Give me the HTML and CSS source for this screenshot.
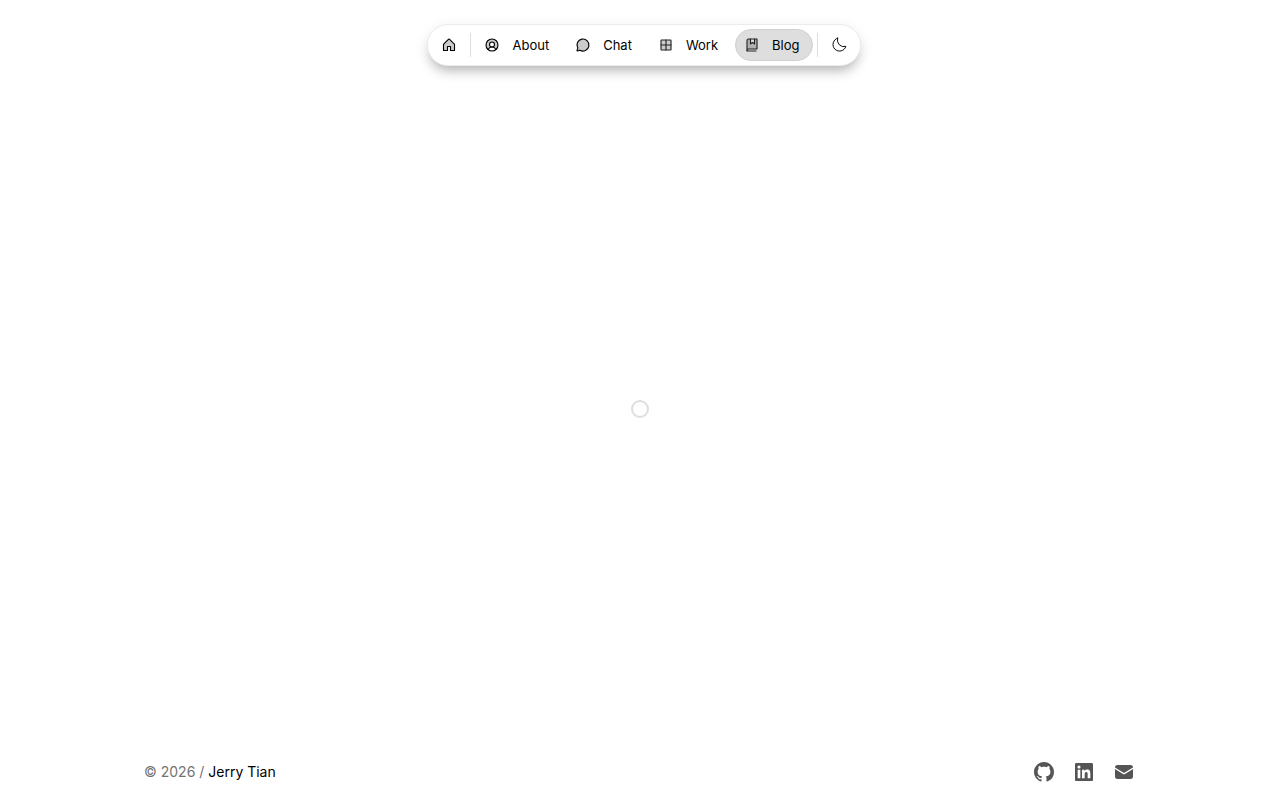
FILE: index.html
```html
<!DOCTYPE html>
<html lang="en">
<head>
  <meta charset="UTF-8">
  <meta name="viewport" content="width=device-width, initial-scale=1.0">
  <title>Blog - Jerry Tian</title>
  <link rel="stylesheet" href="styles.css">
</head>
<body>
  <header class="header">
    <nav class="nav" aria-label="Main">
      <a class="nav-item icon-only" href="/" aria-label="Home">
        <svg class="icon" viewBox="0 0 256 256">
          <path class="tone" d="M104,216V152h48v64h64V120a8,8,0,0,0-2.34-5.66l-80-80a8,8,0,0,0-11.32,0l-80,80A8,8,0,0,0,40,120v96Z"/>
        </svg>
      </a>
      <span class="divider"></span>
      <a class="nav-item" href="/about">
        <svg class="icon" viewBox="0 0 256 256">
          <path class="shade" d="M128,32A96,96,0,0,0,63.8,199.37a72,72,0,0,1,42-40a40,40,0,1,1,44.4,0a72,72,0,0,1,42,40A96,96,0,0,0,128,32Z"/>
          <circle cx="128" cy="120" r="40"/>
          <circle cx="128" cy="128" r="96"/>
          <path d="M63.8,199.37a72,72,0,0,1,128.4,0"/>
        </svg>
        <span>About</span>
      </a>
      <a class="nav-item" href="/chat">
        <svg class="icon" viewBox="0 0 256 256">
          <path class="tone" d="M45.15,177.66A96,96,0,1,1,78.34,210.850L38.540,224.120a8,8,0,0,1-6.660-10.120Z"/>
        </svg>
        <span>Chat</span>
      </a>
      <a class="nav-item" href="/work">
        <svg class="icon soft" viewBox="0 0 256 256">
          <rect class="tone" x="48" y="48" width="160" height="160" rx="8"/>
          <path d="M128,48V208M48,128H208"/>
        </svg>
        <span>Work</span>
      </a>
      <a class="nav-item active" href="/blog" aria-current="page">
        <svg class="icon soft" viewBox="0 0 256 256">
          <path class="shade" d="M168,32v96l-32-24-32,24V32H72A24,24,0,0,0,48,56V216a24,24,0,0,1,24-24H208V32Z"/>
          <path d="M48,216a24,24,0,0,1,24-24H208V32H72A24,24,0,0,0,48,56Z"/>
          <path d="M48,216v8H192"/>
          <path d="M168,32v80l-32-24-32,24V32"/>
        </svg>
        <span>Blog</span>
      </a>
      <span class="divider"></span>
      <button class="nav-item icon-only" type="button" aria-label="Toggle theme">
        <svg class="icon thin" viewBox="12 12 232 232">
          <path d="M108.11,28.11A96.09,96.09,0,0,0,227.89,147.89,96,96,0,1,1,108.11,28.11Z"/>
        </svg>
      </button>
    </nav>
  </header>

  <main class="main">
    <div class="spinner" role="status" aria-label="Loading"></div>
  </main>

  <footer class="footer">
    <p class="copyright">© 2026 / <a href="/about">Jerry Tian</a></p>
    <div class="social">
      <a href="https://github.com" aria-label="GitHub">
        <svg class="github" viewBox="0 0 16 16"><path d="M8 0C3.58 0 0 3.58 0 8c0 3.54 2.29 6.53 5.47 7.59.4.07.55-.17.55-.38 0-.19-.01-.82-.01-1.49-2.01.37-2.53-.49-2.69-.94-.09-.23-.48-.94-.82-1.13-.28-.15-.68-.52-.01-.53.63-.01 1.08.58 1.23.82.72 1.21 1.87.87 2.33.66.07-.52.28-.87.51-1.07-1.78-.2-3.64-.89-3.64-3.95 0-.87.31-1.59.82-2.15-.08-.2-.36-1.02.08-2.12 0 0 .67-.21 2.2.82.64-.18 1.32-.27 2-.27s1.36.09 2 .27c1.53-1.04 2.2-.82 2.2-.82.44 1.1.16 1.92.08 2.12.51.56.82 1.27.82 2.15 0 3.07-1.87 3.75-3.65 3.95.29.25.54.73.54 1.48 0 1.07-.01 1.93-.01 2.2 0 .21.15.46.55.38A8.01 8.01 0 0 0 16 8c0-4.42-3.58-8-8-8z"/></svg>
      </a>
      <a href="https://linkedin.com" aria-label="LinkedIn">
        <svg viewBox="0 0 24 24"><path d="M18.335 18.339H15.67v-4.177c0-.996-.02-2.278-1.39-2.278-1.389 0-1.601 1.084-1.601 2.205v4.25h-2.666V9.75h2.56v1.17h.035c.358-.674 1.228-1.387 2.528-1.387 2.7 0 3.2 1.778 3.2 4.091v4.715zM7.003 8.575a1.546 1.546 0 0 1-1.548-1.549 1.548 1.548 0 1 1 1.547 1.549zm1.336 9.764H5.666V9.75H8.34v8.589zM19.67 3H4.329C3.593 3 3 3.58 3 4.297v15.406C3 20.42 3.594 21 4.328 21h15.338C20.4 21 21 20.42 21 19.703V4.297C21 3.58 20.4 3 19.666 3h.003z"/></svg>
      </a>
      <a href="mailto:hello@example.com" aria-label="Email">
        <svg viewBox="0 0 24 24">
          <path d="M3 7.4C3 6 4 5 5.2 5H18.8C20 5 21 6 21 7.4L12.8 12.6a1.6 1.6 0 0 1-1.6 0Z"/>
          <path d="M3 9V16.8C3 18 4 19 5.2 19H18.8C20 19 21 18 21 16.8V9L13 14a2 2 0 0 1-2 0Z"/>
        </svg>
      </a>
    </div>
  </footer>
</body>
</html>
```

FILE: styles.css
```css
* {
  box-sizing: border-box;
}
body {
  display: flex;
  flex-direction: column;
  min-height: 100vh;
  margin: 0;
  background: #fff;
  color: #000;
  font-family: Inter, "Liberation Sans", sans-serif;
}
a {
  color: inherit;
  text-decoration: none;
}
.header {
  display: flex;
  justify-content: center;
  padding: 24px 0 0 8px;
}
.nav {
  display: flex;
  align-items: center;
  gap: 4px;
  padding: 4px;
  border: 1px solid #ebebeb;
  border-radius: 21px;
  background: #fff;
  box-shadow: 0 8px 12px -4px rgba(0, 0, 0, 0.25), 0 4px 16px rgba(0, 0, 0, 0.08);
}
.nav-item {
  display: flex;
  align-items: center;
  gap: 12px;
  height: 32px;
  padding: 0 12px 0 8px;
  border: 1px solid transparent;
  border-radius: 16px;
  background: none;
  color: #000;
  font-size: 13px;
  line-height: 20px;
  cursor: pointer;
}
.nav-item.icon-only {
  padding: 0 8px;
}
.nav-item.active {
  border-color: #d0d0d0;
  background: #dedede;
}
.divider {
  width: 1px;
  height: 24px;
  background: #dedede;
}
.icon {
  width: 16px;
  height: 16px;
  fill: none;
  stroke: currentColor;
  stroke-width: 18;
  stroke-linecap: round;
  stroke-linejoin: round;
}
.icon.soft {
  stroke: #222;
}
.icon.thin {
  stroke-width: 14;
}
.icon .tone,
.icon .shade {
  fill: #000;
  fill-opacity: 0.2;
}
.icon .shade {
  stroke: none;
}
.main {
  display: flex;
  flex: 1;
  align-items: center;
  justify-content: center;
  padding-bottom: 8px;
}
.spinner {
  width: 18px;
  height: 18px;
  border: 2px solid #dedede;
  border-radius: 50%;
}
.footer {
  display: flex;
  align-items: center;
  justify-content: space-between;
  width: 100%;
  max-width: 1024px;
  margin: 0 auto;
  padding: 0 16px 16px;
}
.copyright {
  margin: 0;
  color: #737373;
  font-size: 14px;
  line-height: 24px;
}
.copyright a {
  color: #000;
}
.social {
  display: flex;
  gap: 16px;
}
.social a {
  display: flex;
  align-items: center;
  justify-content: center;
  width: 24px;
  height: 24px;
}
.social svg {
  width: 24px;
  height: 24px;
  fill: #555;
}
.social .github {
  width: 20px;
  height: 20px;
}
```
